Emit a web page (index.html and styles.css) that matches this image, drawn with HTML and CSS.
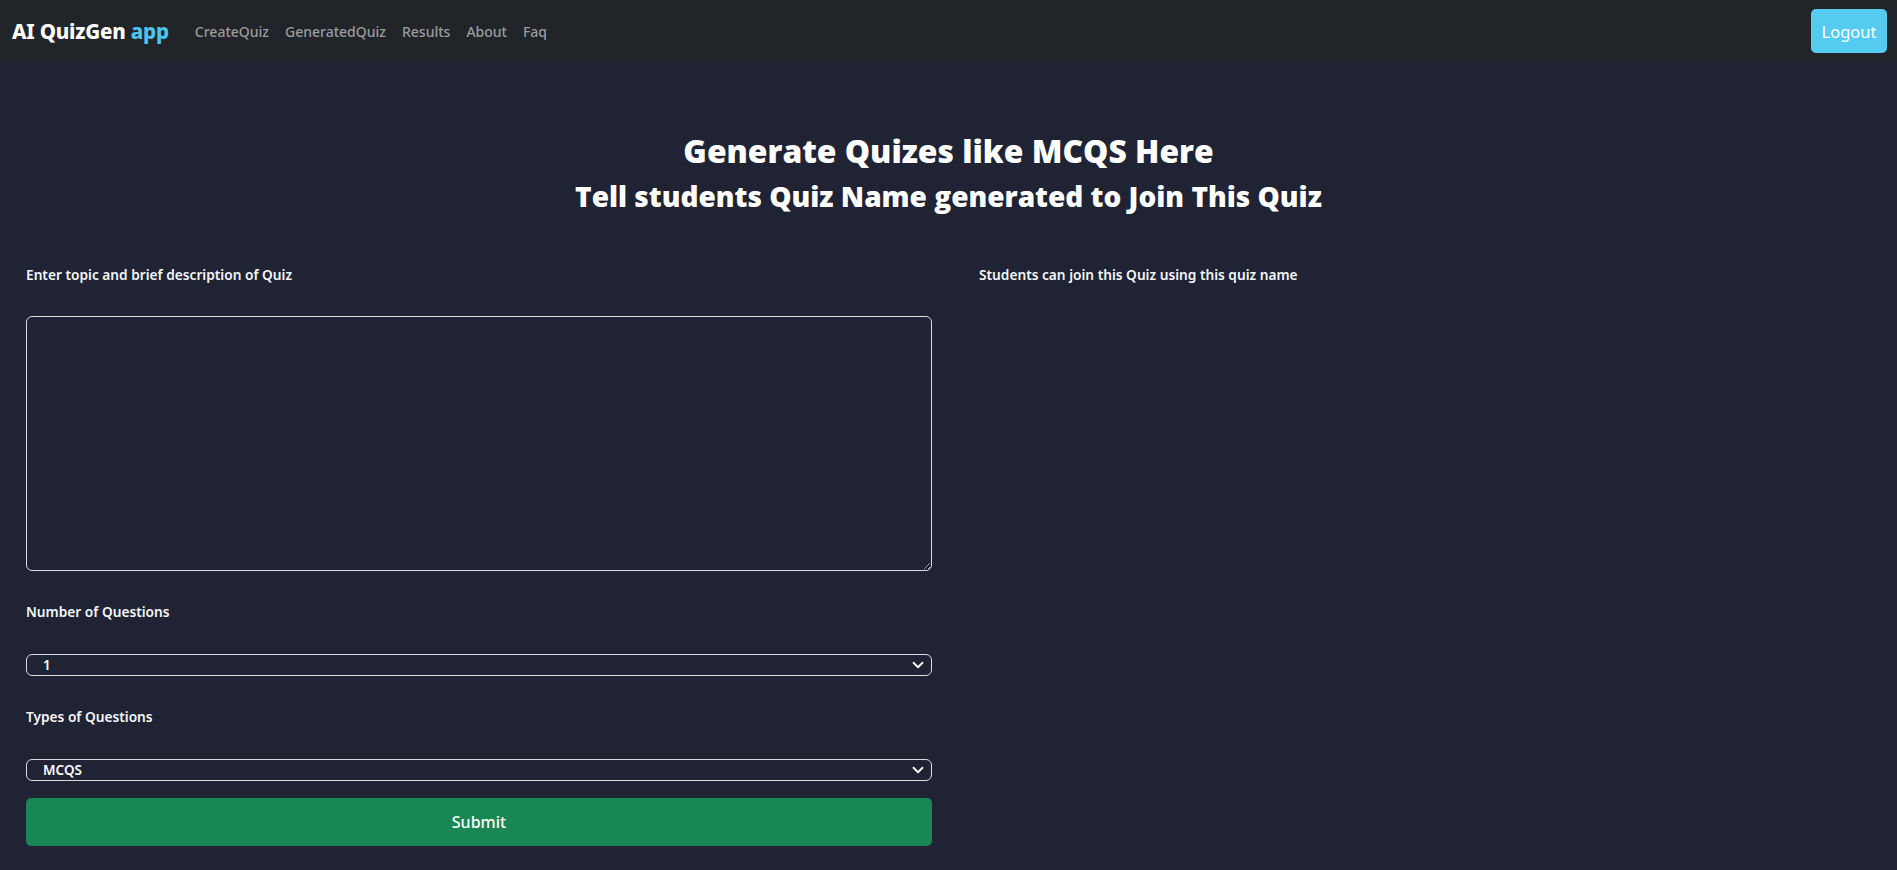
FILE: index.html
```html
<!DOCTYPE html>
<html lang="en">
<head>
<meta charset="utf-8">
<title>AI QuizGen app</title>
<link rel="stylesheet" href="styles.css">
</head>
<body>
<nav class="navbar">
  <div class="nav-left">
    <a class="brand" href="#">AI QuizGen <span class="brand-accent">app</span></a>
    <ul class="nav-links">
      <li><a href="#">CreateQuiz</a></li>
      <li><a href="#">GeneratedQuiz</a></li>
      <li><a href="#">Results</a></li>
      <li><a href="#">About</a></li>
      <li><a href="#">Faq</a></li>
    </ul>
  </div>
  <button class="btn-logout" type="button">Logout</button>
</nav>

<main class="page">
  <header class="heading">
    <h1 class="title">Generate Quizes like MCQS Here</h1>
    <h2 class="subtitle">Tell students Quiz Name generated to Join This Quiz</h2>
  </header>

  <div class="columns">
    <form class="quiz-form">
      <label class="field-label first" for="topic">Enter topic and brief description of Quiz</label>
      <textarea id="topic" class="topic"></textarea>

      <label class="field-label" for="count">Number of Questions</label>
      <div class="select-wrap">
        <select id="count" class="select">
          <option>1</option>
          <option>2</option>
          <option>3</option>
          <option>4</option>
          <option>5</option>
        </select>
        <svg class="chev" viewBox="0 0 16 16" width="12" height="12"><path d="M2 5l6 6 6-6" fill="none" stroke="#fff" stroke-width="2.4" stroke-linecap="round" stroke-linejoin="round"/></svg>
      </div>

      <label class="field-label" for="type">Types of Questions</label>
      <div class="select-wrap">
        <select id="type" class="select">
          <option>MCQS</option>
        </select>
        <svg class="chev" viewBox="0 0 16 16" width="12" height="12"><path d="M2 5l6 6 6-6" fill="none" stroke="#fff" stroke-width="2.4" stroke-linecap="round" stroke-linejoin="round"/></svg>
      </div>

      <button class="btn-submit" type="button">Submit</button>
    </form>

    <aside class="side">
      <p class="field-label first">Students can join this Quiz using this quiz name</p>
    </aside>
  </div>
</main>
</body>
</html>
```

FILE: styles.css
```css
* { box-sizing: border-box; }

html, body {
  margin: 0;
  padding: 0;
}

body {
  background: #1f2333;
  color: #fff;
  font-family: "Noto Sans", "Open Sans", sans-serif;
  min-height: 870px;
}

.navbar {
  height: 62px;
  background: #212529;
  display: flex;
  align-items: center;
  justify-content: space-between;
  padding: 0 10px 0 12px;
}

.nav-left {
  display: flex;
  align-items: center;
  gap: 26px;
}

.brand {
  color: #fff;
  text-decoration: none;
  font-weight: 800;
  font-size: 20.5px;
  letter-spacing: -0.2px;
}

.brand-accent { color: #4fc3f0; }

.nav-links {
  list-style: none;
  margin: 0;
  padding: 0;
  display: flex;
  gap: 16px;
}

.nav-links a {
  color: #9a9c9f;
  text-decoration: none;
  font-size: 14px;
  font-weight: 500;
}

.btn-logout {
  height: 44px;
  width: 76px;
  margin-top: 0;
  border: none;
  border-radius: 5px;
  background: #55cbf2;
  color: #fff;
  font-family: "Noto Sans", "Open Sans", sans-serif;
  font-size: 16.5px;
  padding: 0;
}

.page {
  padding: 69px 26px 24px;
}

.heading {
  text-align: center;
}

.title {
  margin: 0;
  font-family: "Open Sans", "Noto Sans", sans-serif;
  font-size: 31.8px;
  line-height: 40px;
  font-weight: 800;
}

.subtitle {
  margin: 7px 0 0;
  font-family: "Open Sans", "Noto Sans", sans-serif;
  font-size: 28px;
  line-height: 36px;
  font-weight: 800;
}

.columns {
  display: grid;
  grid-template-columns: 906px 1fr;
  column-gap: 47px;
  margin-top: 51px;
}

.quiz-form {
  display: flex;
  flex-direction: column;
}

.field-label {
  display: block;
  margin: 31px 0 32px;
  font-size: 13.7px;
  line-height: 20px;
  font-weight: 600;
  color: #f4f6fa;
}

.field-label.first { margin-top: 0; margin-bottom: 31px; }

.topic {
  display: block;
  width: 100%;
  height: 255px;
  background: transparent;
  border: 1px solid #d8dbe0;
  border-radius: 6px;
  color: #fff;
  resize: both;
  margin: 0;
}

.select-wrap {
  position: relative;
}

.select {
  display: block;
  width: 100%;
  height: 22px;
  appearance: none;
  -webkit-appearance: none;
  background: transparent;
  border: 1px solid #d8dbe0;
  border-radius: 6px;
  color: #fff;
  font-family: "Noto Sans", "Open Sans", sans-serif;
  font-size: 13.5px;
  font-weight: 600;
  padding: 0 0 0 16px;
  margin: 0;
}

.select option { background: #1f2333; }

.chev {
  position: absolute;
  right: 8px;
  top: 5px;
  pointer-events: none;
}

.btn-submit {
  margin-top: 17px;
  height: 48px;
  border: none;
  border-radius: 5px;
  background: #198754;
  color: #fff;
  font-family: "Noto Sans", "Open Sans", sans-serif;
  font-size: 16px;
  font-weight: 500;
}

.side .field-label { margin: 0; }
```
